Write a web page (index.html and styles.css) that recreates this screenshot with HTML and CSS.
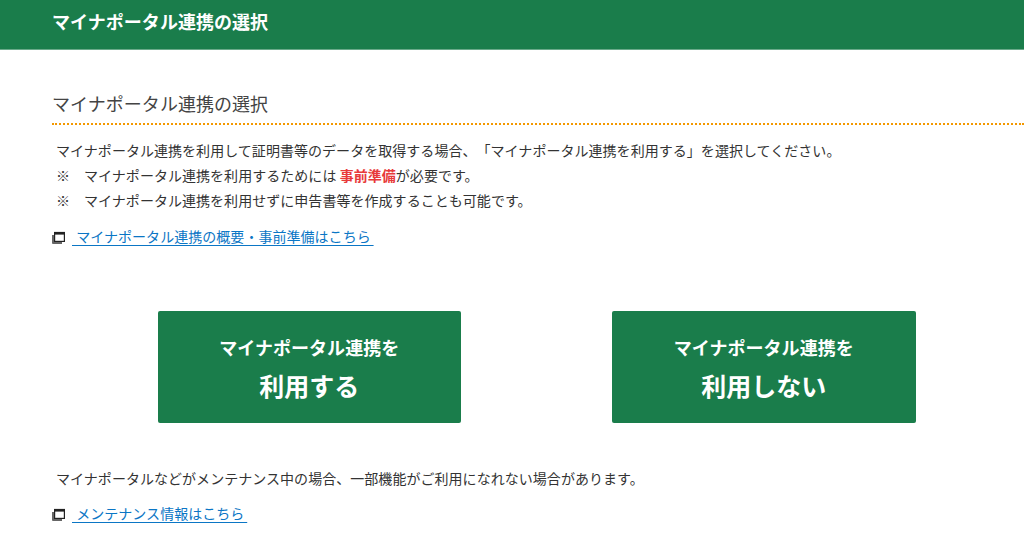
FILE: index.html
```html
<!DOCTYPE html>
<html lang="ja">
<head>
  <meta charset="UTF-8">
  <title>マイナポータル連携の選択</title>
  <meta name="viewport" content="width=device-width, initial-scale=1">
  <link rel="stylesheet" href="styles.css">
</head>
<body>
  <div class="header">マイナポータル連携の選択</div>
  <div class="contents">
    <h2>マイナポータル連携の選択</h2>
    <div class="notes notes-first">
      <p>マイナポータル連携を利用して証明書等のデータを取得する場合、「マイナポータル連携を利用する」を選択してください。</p>
      <p><span class="mark">※</span>マイナポータル連携を利用するためには <span class="red">事前準備</span>が必要です。</p>
      <p><span class="mark">※</span>マイナポータル連携を利用せずに申告書等を作成することも可能です。</p>
    </div>
    <div class="linkrow">
      <svg class="winicon" width="13" height="13" viewBox="0 0 13 13"><path d="M0 4h2v7h8v2H1a1 1 0 0 1-1-1z" fill="#666"/><rect x="2.6" y="1.5" width="9.8" height="8.9" fill="#fff" stroke="#222" stroke-width="1.2"/><rect x="2" y="1" width="11" height="2.6" fill="#222"/></svg>
      <a href="#">&nbsp;マイナポータル連携の概要・事前準備はこちら&#8201;</a>
    </div>
    <div class="buttons">
      <a class="btn" href="#"><span class="btn-top">マイナポータル連携を</span><span class="btn-main">利用する</span></a>
      <a class="btn" href="#"><span class="btn-top">マイナポータル連携を</span><span class="btn-main">利用しない</span></a>
    </div>
    <div class="notes">
      <p>マイナポータルなどがメンテナンス中の場合、一部機能がご利用になれない場合があります。</p>
    </div>
    <div class="linkrow linkrow-last">
      <svg class="winicon" width="13" height="13" viewBox="0 0 13 13"><path d="M0 4h2v7h8v2H1a1 1 0 0 1-1-1z" fill="#666"/><rect x="2.6" y="1.5" width="9.8" height="8.9" fill="#fff" stroke="#222" stroke-width="1.2"/><rect x="2" y="1" width="11" height="2.6" fill="#222"/></svg>
      <a href="#">&nbsp;メンテナンス情報はこちら&#8201;</a>
    </div>
  </div>
</body>
</html>
```
FILE: styles.css
```css
body {
  margin: 0;
  font-family: "Noto Sans CJK JP", "Noto Sans", sans-serif;
  font-size: 14px;
  letter-spacing: 0.04px;
  color: #333;
  background: #fff;
  text-spacing-trim: space-all;
  overflow: hidden;
}
.header {
  height: 49px;
  line-height: 43px;
  padding-left: 52px;
  background: #1a7d4b;
  border-bottom: 1px solid #6aaa8a;
  color: #fff;
  font-size: 18px;
  font-weight: bold;
}
.contents { padding-left: 52px; }
h2 {
  margin: 40px 0 0;
  height: 33px;
  line-height: 27px;
  font-size: 18px;
  font-weight: normal;
  color: #444;
  border-bottom: 2px dotted #f39800;
}
.notes { padding-left: 4px; }
.notes p {
  margin: 0;
  height: 25px;
  line-height: 25px;
}
.notes-first { margin-top: 13px; }
.mark { display: inline-block; width: 28px; }
.red { color: #e83a3a; font-weight: bold; }
.linkrow {
  display: flex;
  align-items: center;
  margin-top: 10px;
  height: 25px;
  gap: 7px;
}
.linkrow-last { margin-top: 9px; }
.linkrow a {
  color: #0b76c5;
  text-decoration: underline;
  text-underline-offset: 3px;
  word-spacing: 1px;
}
.winicon { flex: none; margin-top: 3px; }
.buttons {
  display: flex;
  gap: 151px;
  margin: 63px 0 43px 105.5px;
}
.btn {
  display: flex;
  flex-direction: column;
  align-items: center;
  width: 303.5px;
  height: 112px;
  border-radius: 2px;
  background: #1a7d4b;
  color: #fff;
  font-weight: bold;
  text-decoration: none;
}
.btn-top { font-size: 18px; line-height: 34px; margin-top: 19px; }
.btn-main { font-size: 25px; line-height: 44px; margin-top: -1px; }
```
